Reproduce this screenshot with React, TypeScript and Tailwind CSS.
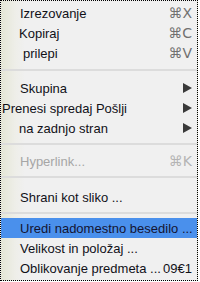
import React from "react";

const font = { fontFamily: '"Liberation Sans", Arial, "DejaVu Sans", sans-serif' };

function Tri() {
  return (
    <svg width="9" height="10" viewBox="0 0 9 10" className="block">
      <path d="M0 0 L9 5 L0 10 Z" fill="#3a3a3a" />
    </svg>
  );
}

function Row({
  label,
  pl = "pl-[19px]",
  right,
  disabled,
  active,
}: {
  label: string;
  pl?: string;
  right?: React.ReactNode;
  disabled?: boolean;
  active?: boolean;
}) {
  return (
    <div
      className={`flex h-[20px] items-center justify-between pr-[5px] ${pl} ${
        active ? "bg-[#4a90ec]" : ""
      }`}
    >
      <span
        className={`text-[13px] leading-none whitespace-nowrap ${
          disabled ? "text-[#a6a6a6]" : active ? "text-[#141432]" : "text-[#111118]"
        }`}
      >
        {label}
      </span>
      {right}
    </div>
  );
}

function Key({ k, disabled }: { k: string; disabled?: boolean }) {
  return (
    <span
      className={`text-[14px] leading-none whitespace-nowrap ${
        disabled ? "text-[#b4b4b4]" : "text-[#707070]"
      }`}
      style={{ fontFamily: '"DejaVu Sans", "Liberation Sans", sans-serif' }}
    >
      {k}
    </span>
  );
}

function Sep({ h, top }: { h: string; top: string }) {
  return (
    <div className={`${h} ${top} flex flex-col`}>
      <div className="h-[2px] w-full bg-[#dcdcdc]" />
    </div>
  );
}

export default function App() {
  return (
    <div className="w-[200px] h-[282px] bg-white" style={font}>
      <div className="w-[198px] h-[281px] border border-dotted border-black bg-[linear-gradient(to_right,#e4e6d6_0px,#eeeee8_14px,#f0f0f0_24px)] pt-[2px] overflow-hidden">
        <Row label="Izrezovanje" pl="pl-[19px]" right={<Key k="⌘X" />} />
        <Row label="Kopiraj" pl="pl-[18px]" right={<Key k="⌘C" />} />
        <Row label="prilepi" pl="pl-[22px]" right={<Key k="⌘V" />} />
        <Sep h="h-[15px]" top="pt-[6px]" />
        <Row label="Skupina" right={<Tri />} />
        <Row label="Prenesi spredaj Pošlji" pl="pl-[1px]" right={<Tri />} />
        <Row label="na zadnjo stran" pl="pl-[18px]" right={<Tri />} />
        <Sep h="h-[13px]" top="pt-[5px]" />
        <Row label="Hyperlink..." disabled right={<Key k="⌘K" disabled />} />
        <Sep h="h-[16px]" top="pt-[5px]" />
        <Row label="Shrani kot sliko ..." />
        <Sep h="h-[11px]" top="pt-[5px]" />
        <Row label="Uredi nadomestno besedilo ..." active />
        <Row label="Velikost in položaj ..." />
        <Row
          label="Oblikovanje predmeta ..."
          right={<span className="text-[13px] leading-none text-[#111118]">09€1</span>}
        />
      </div>
    </div>
  );
}
